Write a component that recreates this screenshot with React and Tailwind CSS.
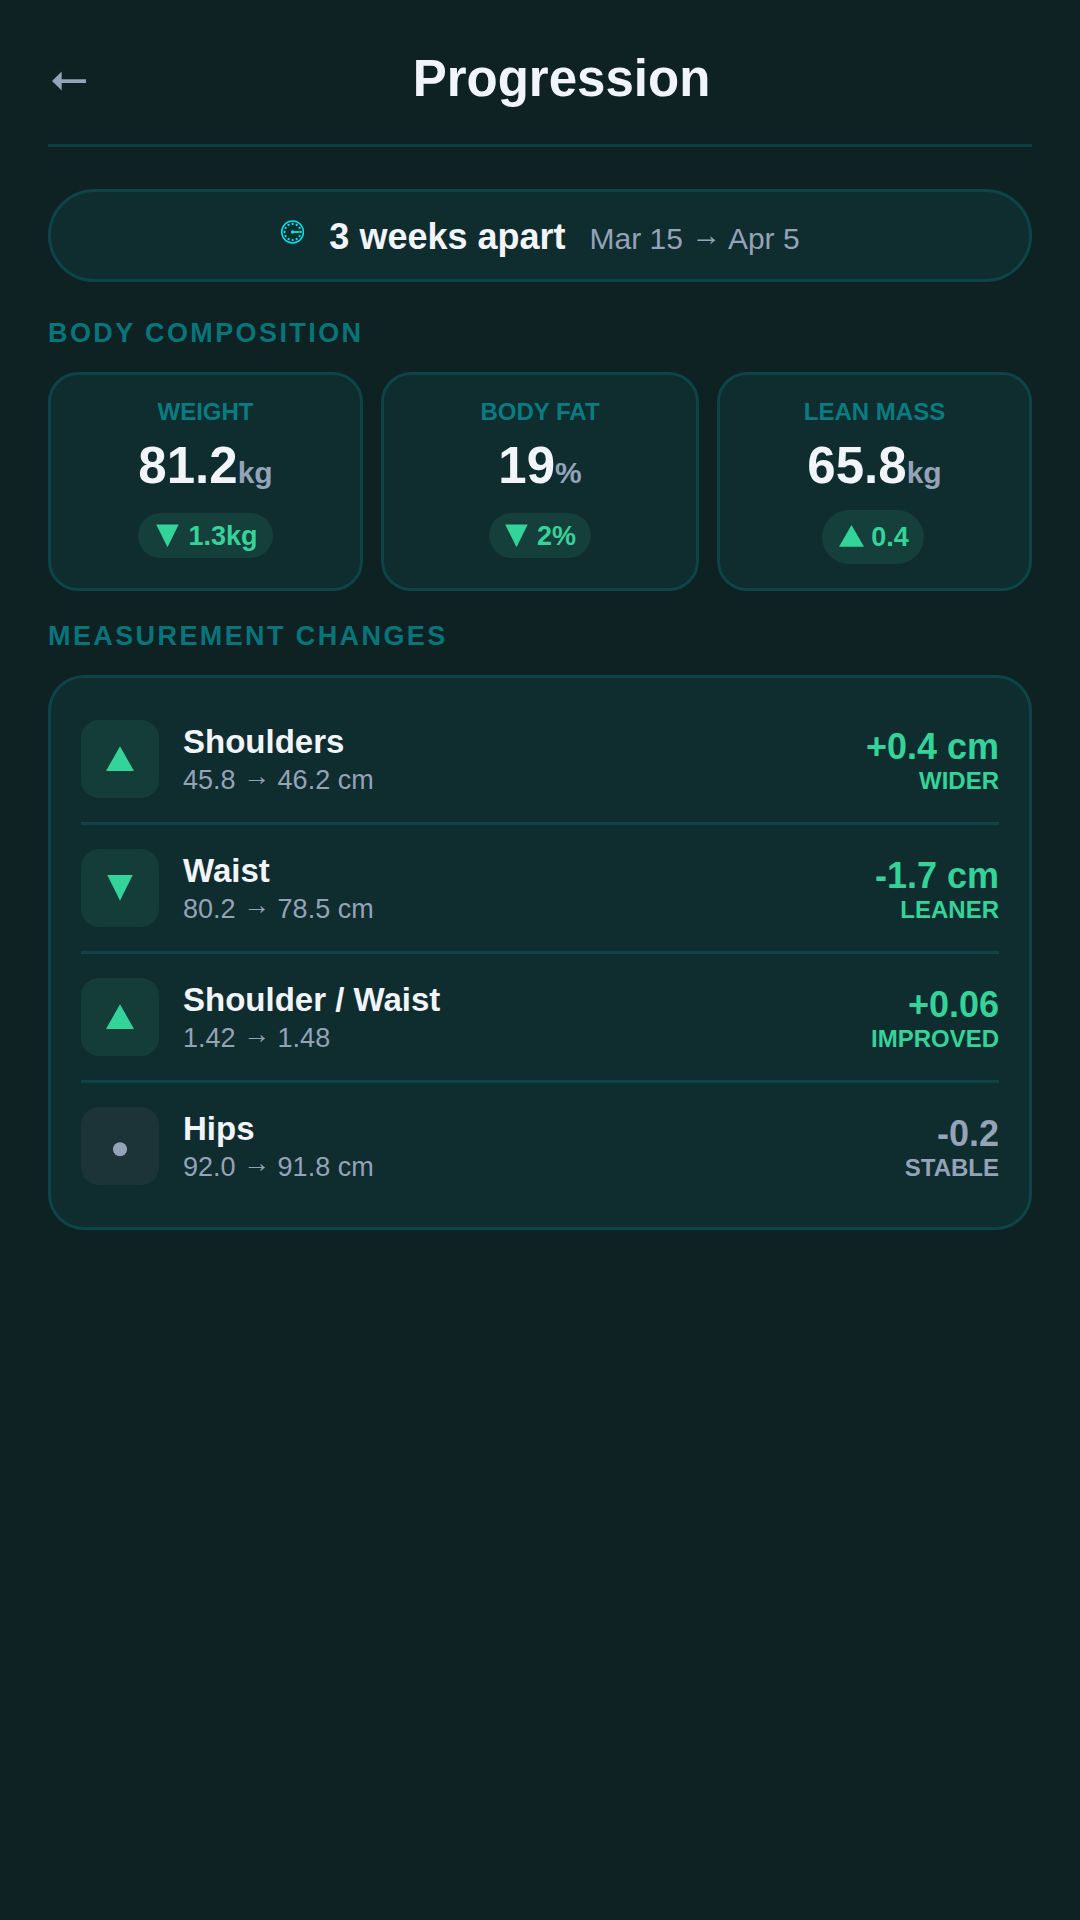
import React from "react";

const STATS = [
  { label: "WEIGHT", value: "81.2", unit: "kg", dir: "down", delta: "1.3kg", pill: "mt-[17px] h-[45px] w-[135px] pl-0.5" },
  { label: "BODY FAT", value: "19", unit: "%", dir: "down", delta: "2%", pill: "mt-[17px] h-[45px] w-[102px]" },
  { label: "LEAN MASS", value: "65.8", unit: "kg", dir: "up", delta: "0.4", pill: "mt-[14px] mr-[3px] h-[54px] w-[102px]" },
];

const ROWS = [
  { name: "Shoulders", from: "45.8", to: "46.2 cm", change: "+0.4 cm", verdict: "WIDER", dir: "up" },
  { name: "Waist", from: "80.2", to: "78.5 cm", change: "-1.7 cm", verdict: "LEANER", dir: "down" },
  { name: "Shoulder / Waist", from: "1.42", to: "1.48", change: "+0.06", verdict: "IMPROVED", dir: "up" },
  { name: "Hips", from: "92.0", to: "91.8 cm", change: "-0.2", verdict: "STABLE", dir: "flat" },
];

const TICKS = Array.from({ length: 12 }, (_, i) => (i * Math.PI) / 6);

function ClockIcon() {
  return (
    <svg className="mr-px -mt-2 h-6 w-6 shrink-0" viewBox="0 0 24 24" fill="none">
      <circle cx="12.6" cy="12" r="10.9" stroke="#00e5ee" strokeWidth="1.5" />
      {TICKS.map((a) => (
        <circle key={a} cx={12.6 + 8.1 * Math.cos(a)} cy={12 + 8.1 * Math.sin(a)} r="1.15" fill="#00e5ee" />
      ))}
      <path d="M12.6 12H19.6" stroke="#00e5ee" strokeWidth="1.8" />
      <circle cx="12.6" cy="12" r="1.7" fill="#00e5ee" />
    </svg>
  );
}

function PillArrow({ dir }) {
  if (dir === "up") {
    return (
      <svg className="h-6 w-[34px] shrink-0" viewBox="0 0 34 24" fill="#34d399">
        <path d="M14.5 0L27 21.7H2z" />
      </svg>
    );
  }
  return (
    <svg className="h-6 w-[33px] shrink-0" viewBox="0 0 33 24" fill="#34d399">
      <path d="M1.2 0.5H23.7L12.5 23.2z" />
    </svg>
  );
}

function RowIcon({ dir }) {
  return (
    <div className={`size-[78px] shrink-0 rounded-[18px] ${dir === "flat" ? "bg-[#1c3338]" : "bg-[#143c39]"}`}>
      <svg className="size-full" viewBox="0 0 78 78">
        {dir === "up" && <path d="M39 26.3L53 51H25z" fill="#34d399" />}
        {dir === "down" && <path d="M26.3 26H51.7L39 51.7z" fill="#34d399" />}
        {dir === "flat" && <circle cx="39" cy="42.3" r="7" fill="#94a3b8" />}
      </svg>
    </div>
  );
}

function Range({ from, to }) {
  return (
    <>
      {from} <span className="relative -top-1">→</span> {to}
    </>
  );
}

export default function App() {
  return (
    <div className="min-h-[1920px] w-[1080px] bg-[#0e2123] px-12 font-['Liberation_Sans',Arial,sans-serif] text-[#f1f5f9]">
      <header className="flex h-[147px] items-center border-b-[3px] border-[#0e3c3f]">
        <button className="w-[43px] shrink-0">
          <svg className="mt-[17px] ml-1 h-5 w-[34px]" viewBox="0 0 34 20" fill="#94a3b8">
            <path d="M0 10L9.7 0.6V8.2H34V12H9.7V19.6z" />
          </svg>
        </button>
        <h1 className="mt-[13px] flex-1 text-center text-[51px] leading-[60px] font-bold">Progression</h1>
      </header>

      <div className="mt-[42px] flex h-[93px] items-center justify-center gap-6 rounded-full border-[3px] border-[#0d4448] bg-[#0f2c2e]">
        <ClockIcon />
        <div className="flex items-baseline gap-6 pt-0.5">
          <span className="text-[36px] leading-[42px] font-bold">3 weeks apart</span>
          <span className="text-[30px] leading-9 text-[#94a3b8]">
            <Range from="Mar 15" to="Apr 5" />
          </span>
        </div>
      </div>

      <h2 className="mt-[33px] text-[27px] leading-9 font-bold tracking-[2.4px] text-[#08757a]">BODY COMPOSITION</h2>
      <div className="mt-[21px] grid grid-cols-[315px_318px_315px] gap-[18px]">
        {STATS.map((s) => (
          <div
            key={s.label}
            className="flex h-[219px] flex-col items-center rounded-[30px] border-[3px] border-[#0d4448] bg-[#0f2c2e] pt-[22px]"
          >
            <div className="text-2xl leading-[30px] font-bold text-[#087c81]">{s.label}</div>
            <div className="mt-[9px] flex items-baseline text-[51px] leading-[60px] font-bold">
              {s.value}
              <span className="text-[30px] leading-none text-[#94a3b8]">{s.unit}</span>
            </div>
            <div className={`flex items-center justify-center rounded-full bg-[#143f3b] text-[#34d399] ${s.pill}`}>
              <PillArrow dir={s.dir} />
              <span className="text-[27px] leading-[30px] font-bold">{s.delta}</span>
            </div>
          </div>
        ))}
      </div>

      <h2 className="mt-[27px] text-[27px] leading-9 font-bold tracking-[2.4px] text-[#08757a]">MEASUREMENT CHANGES</h2>
      <div className="mt-[21px] rounded-[36px] border-[3px] border-[#0d4448] bg-[#0f2c2e] px-[30px] py-[18px]">
        {ROWS.map((r) => (
          <div key={r.name} className="flex items-center gap-6 border-b-[3px] border-[#0d4448] py-6 last:border-b-0">
            <RowIcon dir={r.dir} />
            <div className="flex-1">
              <div className="text-[33px] leading-[39px] font-bold">{r.name}</div>
              <div className="mt-[3px] text-[27px] leading-[33px] text-[#94a3b8]">
                <Range from={r.from} to={r.to} />
              </div>
            </div>
            <div className={`pt-1 text-right font-bold ${r.dir === "flat" ? "text-[#94a3b8]" : "text-[#34d399]"}`}>
              <div className="text-[36px] leading-9">{r.change}</div>
              <div className="mt-0.5 text-2xl leading-[27px]">{r.verdict}</div>
            </div>
          </div>
        ))}
      </div>
    </div>
  );
}
